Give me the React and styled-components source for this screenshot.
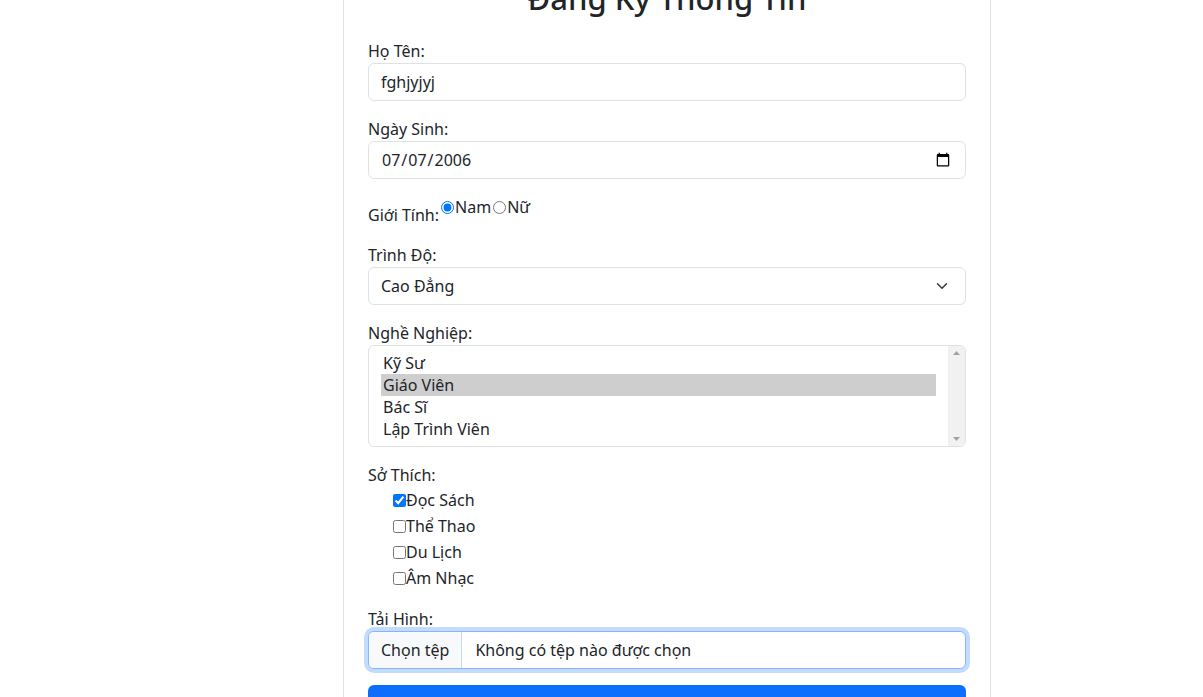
import React from "react";
import styled, { createGlobalStyle } from "styled-components";

const GlobalStyle = createGlobalStyle`
  html, body {
    margin: 0;
    background: #fff;
  }
  body {
    font-family: "Noto Sans", "Open Sans", sans-serif;
    font-size: 16px;
    line-height: 1.5;
    color: #212529;
    overflow: hidden;
  }
  * {
    box-sizing: border-box;
  }
`;

const Page = styled.div`
  padding-left: 343px;
`;

const Card = styled.form`
  width: 648px;
  margin-top: -45px;
  padding: 24px;
  border: 1px solid #dee2e6;
  border-radius: 8px;
  background: #fff;
`;

const Title = styled.h2`
  margin: 0 0 22px;
  font-size: 31px;
  font-weight: 500;
  line-height: 1.2;
  text-align: center;
`;

const Field = styled.div`
  margin-bottom: 16px;
`;

const Label = styled.label`
  display: block;
  line-height: 24px;
`;

const Input = styled.input`
  display: block;
  width: 100%;
  height: 38px;
  padding: 6px 12px;
  font-family: inherit;
  font-size: 16px;
  color: #212529;
  border: 1px solid #dee2e6;
  border-radius: 6px;
  background: #fff;
  outline: none;
`;

const SelectWrap = styled.div`
  position: relative;
`;

const Select = styled.select`
  display: block;
  width: 100%;
  height: 38px;
  padding: 6px 36px 6px 12px;
  font-family: inherit;
  font-size: 16px;
  color: #212529;
  border: 1px solid #dee2e6;
  border-radius: 6px;
  background: #fff;
  appearance: none;
  outline: none;
`;

const Chevron = styled.svg`
  position: absolute;
  right: 16px;
  top: 13px;
  width: 16px;
  height: 12px;
  pointer-events: none;
`;

const ListBox = styled.div`
  display: flex;
  height: 102px;
  border: 1px solid #dee2e6;
  border-radius: 6px;
  overflow: hidden;
  background: #fff;
`;

const Options = styled.ul`
  flex: 1;
  margin: 0;
  padding: 6px 12px;
  list-style: none;
`;

const Option = styled.li`
  height: 22px;
  line-height: 22px;
  padding: 0 2px;
  background: ${(p) => (p.$selected ? "#cecece" : "transparent")};
`;

const ScrollTrack = styled.div`
  display: flex;
  flex-direction: column;
  justify-content: space-between;
  align-items: center;
  width: 17px;
  padding: 5px 0;
  background: #f1f1f1;
`;

const Arrow = styled.svg`
  width: 7px;
  height: 4px;
  fill: #a3a3a3;
`;

const GenderRow = styled.div`
  display: flex;
  align-items: flex-start;
  margin-bottom: 16px;
`;

const GenderLabel = styled.span`
  padding-top: 8px;
  line-height: 24px;
`;

const Choice = styled.label`
  display: inline-flex;
  align-items: center;
  line-height: 24px;

  input {
    width: 13px;
    height: 13px;
    margin: 0 1px 0 2px;
  }
`;

const CheckList = styled.div`
  padding-left: 25px;
`;

const CheckItem = styled.label`
  display: flex;
  align-items: center;
  height: 26px;

  input {
    width: 13px;
    height: 13px;
    margin: 0;
  }
`;

const FileBox = styled.label`
  display: flex;
  align-items: stretch;
  height: 38px;
  border: 1px solid #86b7fe;
  border-radius: 6px;
  box-shadow: 0 0 0 4px rgba(13, 110, 253, 0.25);
  overflow: hidden;
  background: #fff;
`;

const FileButton = styled.span`
  display: flex;
  align-items: center;
  padding: 0 12px;
  background: #f8f9fa;
  border-right: 1px solid #c6d9f5;
`;

const FileName = styled.span`
  display: flex;
  align-items: center;
  padding-left: 13px;
`;

const Submit = styled.button`
  display: block;
  width: 100%;
  height: 38px;
  margin-top: 16px;
  border: none;
  border-radius: 6px;
  background: #0d6efd;
  color: #fff;
  font-family: inherit;
  font-size: 16px;
`;

const jobs = ["Kỹ Sư", "Giáo Viên", "Bác Sĩ", "Lập Trình Viên"];

const hobbies = [
  { name: "Đọc Sách", checked: true },
  { name: "Thể Thao", checked: false },
  { name: "Du Lịch", checked: false },
  { name: "Âm Nhạc", checked: false },
];

const App = () => {
  const selectedJob = "Giáo Viên";

  return (
    <>
      <GlobalStyle />
      <Page>
        <Card onSubmit={(e) => e.preventDefault()}>
          <Title>Đăng Ký Thông Tin</Title>

          <Field>
            <Label>Họ Tên:</Label>
            <Input type="text" defaultValue="fghjyjyj" />
          </Field>

          <Field>
            <Label>Ngày Sinh:</Label>
            <Input type="date" defaultValue="2006-07-07" />
          </Field>

          <GenderRow>
            <GenderLabel>Giới Tính:</GenderLabel>
            <Choice>
              <input type="radio" name="gender" defaultChecked />
              Nam
            </Choice>
            <Choice>
              <input type="radio" name="gender" />
              Nữ
            </Choice>
          </GenderRow>

          <Field>
            <Label>Trình Độ:</Label>
            <SelectWrap>
              <Select defaultValue="Cao Đẳng">
                <option>Trung Cấp</option>
                <option>Cao Đẳng</option>
                <option>Đại Học</option>
              </Select>
              <Chevron viewBox="0 0 16 16">
                <path
                  fill="none"
                  stroke="#343a40"
                  strokeLinecap="round"
                  strokeLinejoin="round"
                  strokeWidth="2"
                  d="m2 5 6 6 6-6"
                />
              </Chevron>
            </SelectWrap>
          </Field>

          <Field>
            <Label>Nghề Nghiệp:</Label>
            <ListBox>
              <Options>
                {jobs.map((job) => (
                  <Option key={job} $selected={job === selectedJob}>
                    {job}
                  </Option>
                ))}
              </Options>
              <ScrollTrack>
                <Arrow viewBox="0 0 7 4">
                  <path d="M3.5 0 7 4H0z" />
                </Arrow>
                <Arrow viewBox="0 0 7 4">
                  <path d="M0 0h7L3.5 4z" />
                </Arrow>
              </ScrollTrack>
            </ListBox>
          </Field>

          <Field>
            <Label>Sở Thích:</Label>
            <CheckList>
              {hobbies.map((h) => (
                <CheckItem key={h.name}>
                  <input type="checkbox" defaultChecked={h.checked} />
                  {h.name}
                </CheckItem>
              ))}
            </CheckList>
          </Field>

          <Field>
            <Label>Tải Hình:</Label>
            <FileBox>
              <FileButton>Chọn tệp</FileButton>
              <FileName>Không có tệp nào được chọn</FileName>
            </FileBox>
          </Field>

          <Submit type="submit">Đăng Ký</Submit>
        </Card>
      </Page>
    </>
  );
};

export default App;
